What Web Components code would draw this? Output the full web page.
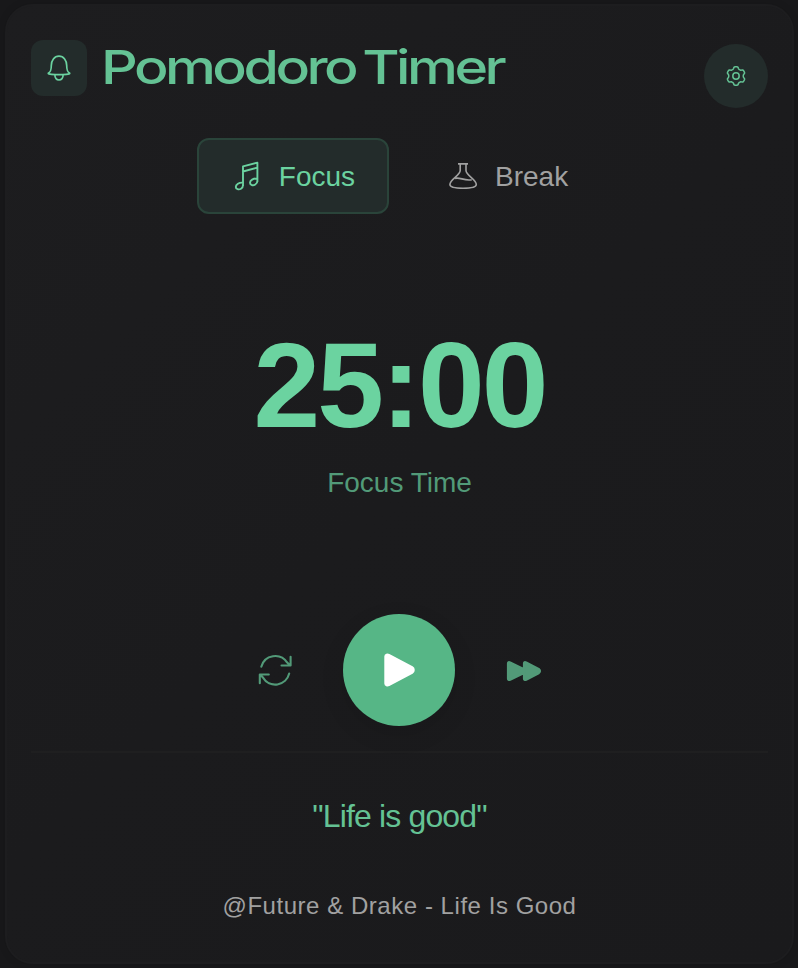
<!DOCTYPE html>
<html lang="en">
<head>
<meta charset="utf-8">
<title>Pomodoro Timer</title>
<style>
html,body{margin:0;height:100%}
body{background:#18181a;font-family:"Liberation Sans",Arial,sans-serif;--mint:#6bd3a0;--mint-2:#64c294;--mint-3:#529a78;--tint:#232c2b;overflow:hidden}
</style>
</head>
<body>
<pomodoro-app></pomodoro-app>
<script>
// Six-lobed cog outline around (12, 12), with a lobe pointing up.
const cog = 'M' + Array.from({length: 120}, (_, i) => {
  const a = i * Math.PI / 60, r = 8.25 + 1.0 * Math.tanh(2.2 * Math.cos(6 * a) + .3);
  return (12 + r * Math.sin(a)).toFixed(2) + ' ' + (12 - r * Math.cos(a)).toFixed(2);
}).join('L') + 'Z';
const icons = {
  bell: ['0 0 28 28', '<path d="M3.4 19.2C5.8 17.6 6.3 16.2 6.3 11.5C6.3 6.5 9.3 2.2 14 2.2S21.7 6.5 21.7 11.5C21.7 16.2 22.2 17.6 24.6 19.2C25.6 20.1 18.5 20.7 14 20.7S2.4 20.1 3.4 19.2ZM9.8 20.8C10 24.3 11.5 26 14 26S18 24.3 18.2 20.8" fill="none" stroke="currentColor" stroke-width="1.7" stroke-linejoin="round"/>'],
  gear: ['0 0 24 24', `<path d="${cog}" fill="none" stroke="currentColor" stroke-width="1.5" stroke-linejoin="round"/><circle cx="12" cy="12" r="3.2" fill="none" stroke="currentColor" stroke-width="1.5"/>`],
  music: ['231 160 32 32', '<path d="M243 186V166.4L257.4 162.7V182M243 171.5L257.4 167.6M243 182.7C239 182.3 235.8 184.4 235.8 187C235.8 189.3 238.8 190 241 188.7C242.6 187.8 243 186.8 243 185M257.4 178.5C253.2 178.2 250 180.3 250 182.8C250 185.1 253 185.9 255.3 184.5C257 183.6 257.4 182.6 257.4 180.8" fill="none" stroke="currentColor" stroke-width="1.9" stroke-linejoin="round"/>'],
  flask: ['447 160 32 32', '<path d="M458 163.9H468M460.2 164V170.5C460.2 175.5 449.9 179.3 449.9 184.5C449.9 187.2 454.5 188.2 463 188.2S476.3 187.2 476.3 184.5C476.3 179.3 466 175.5 466 170.5V164M455 178.4C459.5 176.7 464.3 181.2 471.8 179.7" fill="none" stroke="currentColor" stroke-width="1.6"/>'],
  repeat: ['257 652 36 36', '<path d="M261.3 666.7A14.3 14.3 0 0 1 287.2 662.6L290 665.3M290.6 656.8V665.5H281.5M289.2 673.6A14.3 14.3 0 0 1 263 677.6L260 674.7M259.8 683.2V674.5H268.8" fill="none" stroke="currentColor" stroke-width="2.1" stroke-linecap="round" stroke-linejoin="round"/>'],
  play: ['381 652 36 36', '<path d="M386 656.5C386 655.2 387.4 654.8 388.6 655.4L411.8 667.7C413.5 668.7 413.5 671.3 411.8 672.3L388.6 684.6C387.4 685.2 386 684.8 386 683.5Z" fill="currentColor" stroke="currentColor" stroke-width="3.4" stroke-linejoin="round"/>'],
  forward: ['506 652 36 36', '<path d="M508.3 663.5Q508.3 662 510 662.7L523.4 669.2Q525.8 671.1 523.4 673L510 679.5Q508.3 680.2 508.3 678.5ZM524.3 663.5Q524.3 662 526 662.7L538.5 669.2Q540.9 671.1 538.5 673L526 679.5Q524.3 680.2 524.3 678.5Z" fill="currentColor" stroke="currentColor" stroke-width="2.8" stroke-linejoin="round"/>']
};
function define(name, render) {
  customElements.define(name, class extends HTMLElement {
    constructor() {
      super();
      this.attachShadow({mode: 'open'}).innerHTML = render(this);
    }
  });
}
define('app-icon', el => {
  const [box, art] = icons[el.getAttribute('name')];
  return `<style>:host{display:block;flex:none;width:32px;height:32px}svg{display:block;width:100%;height:100%;overflow:visible}</style><svg viewBox="${box}" aria-hidden="true">${art}</svg>`;
});
define('timer-header', () => `<style>
:host{display:flex;align-items:flex-start;height:68px}
.badge{width:56px;height:56px;border-radius:12px;background:var(--tint);color:var(--mint);display:grid;place-items:center}
.badge app-icon{width:28px;height:28px}
h1{margin:-3px auto 0 14px;font:500 47px/60px Inter,sans-serif;color:var(--mint-2);white-space:nowrap;letter-spacing:-2.9px;word-spacing:-3.8px;transform:scaleX(1.22);transform-origin:0 0}
button{width:64px;height:64px;margin:4px 0 0;padding:0;border:0;border-radius:50%;background:var(--tint);color:var(--mint-2);display:grid;place-items:center}
button app-icon{width:24px;height:24px}
</style><span class="badge"><app-icon name="bell"></app-icon></span><h1><slot></slot></h1><button aria-label="Settings"><app-icon name="gear"></app-icon></button>`);
define('mode-tab', () => `<style>
:host{box-sizing:border-box;display:flex;align-items:center;gap:16px;height:76px;padding:0 32px;border:2px solid transparent;border-radius:12px;font-size:28px;line-height:40px;color:#a1a1a1}
:host([active]){background:var(--tint);border-color:#2a443a;color:var(--mint)}
span{padding-top:2px}
</style><slot name="icon"></slot><span><slot></slot></span>`);
define('mode-tabs', () => `<style>:host{display:flex;justify-content:center;gap:24px;margin-top:30px}</style><slot></slot>`);
define('time-display', () => `<style>
:host{display:block;text-align:center;margin-top:111px}
.time{font-size:120px;line-height:120px;font-weight:700;letter-spacing:-3px;color:var(--mint)}
.label{margin-top:18px;font-size:28px;line-height:40px;color:var(--mint-3)}
</style><div class="time"><slot></slot></div><div class="label"><slot name="label"></slot></div>`);
define('timer-controls', () => `<style>
:host{display:flex;align-items:center;justify-content:center;gap:50px;margin-top:111px;height:112px}
button{margin:0;padding:0;border:0;background:none;color:var(--mint-3)}
button app-icon{width:36px;height:36px}
.play{width:112px;height:112px;margin-right:1px;border-radius:50%;background:#56b686;color:#fff;display:grid;place-items:center;box-shadow:0 8px 24px rgba(0,0,0,.1)}
</style><button aria-label="Restart"><app-icon name="repeat"></app-icon></button><button class="play" aria-label="Play"><app-icon name="play"></app-icon></button><button class="next" aria-label="Skip"><app-icon name="forward"></app-icon></button>`);
define('song-quote', () => `<style>
:host{display:block;margin-top:25px;border-top:2px solid #1f1f20;text-align:center}
.quote{margin-top:43px;font-size:32px;line-height:40px;letter-spacing:-.85px;color:var(--mint-2)}
.source{margin-top:54px;font-size:24px;line-height:32px;letter-spacing:.54px;color:#a1a1a1}
</style><div class="quote"><slot></slot></div><div class="source"><slot name="source"></slot></div>`);
define('pomodoro-app', () => `<style>
:host{display:block;box-sizing:border-box;height:968px;padding:4px 4px 4px 5px}
main{box-sizing:border-box;height:960px;padding:34px 24px 0;border:2px solid #1d1d1f;border-radius:28px;background:linear-gradient(135deg,#1d1d1f,#1b1b1d 50%,#1a1a1c);box-shadow:0 0 8px rgba(0,0,0,.12)}
</style><main>
<timer-header>Pomodoro Timer</timer-header>
<mode-tabs><mode-tab active><app-icon slot="icon" name="music"></app-icon>Focus</mode-tab><mode-tab><app-icon slot="icon" name="flask"></app-icon>Break</mode-tab></mode-tabs>
<time-display>25:00<span slot="label">Focus Time</span></time-display>
<timer-controls></timer-controls>
<song-quote>"Life is good"<span slot="source">@Future &amp; Drake - Life Is Good</span></song-quote>
</main>`);
</script>
</body>
</html>
